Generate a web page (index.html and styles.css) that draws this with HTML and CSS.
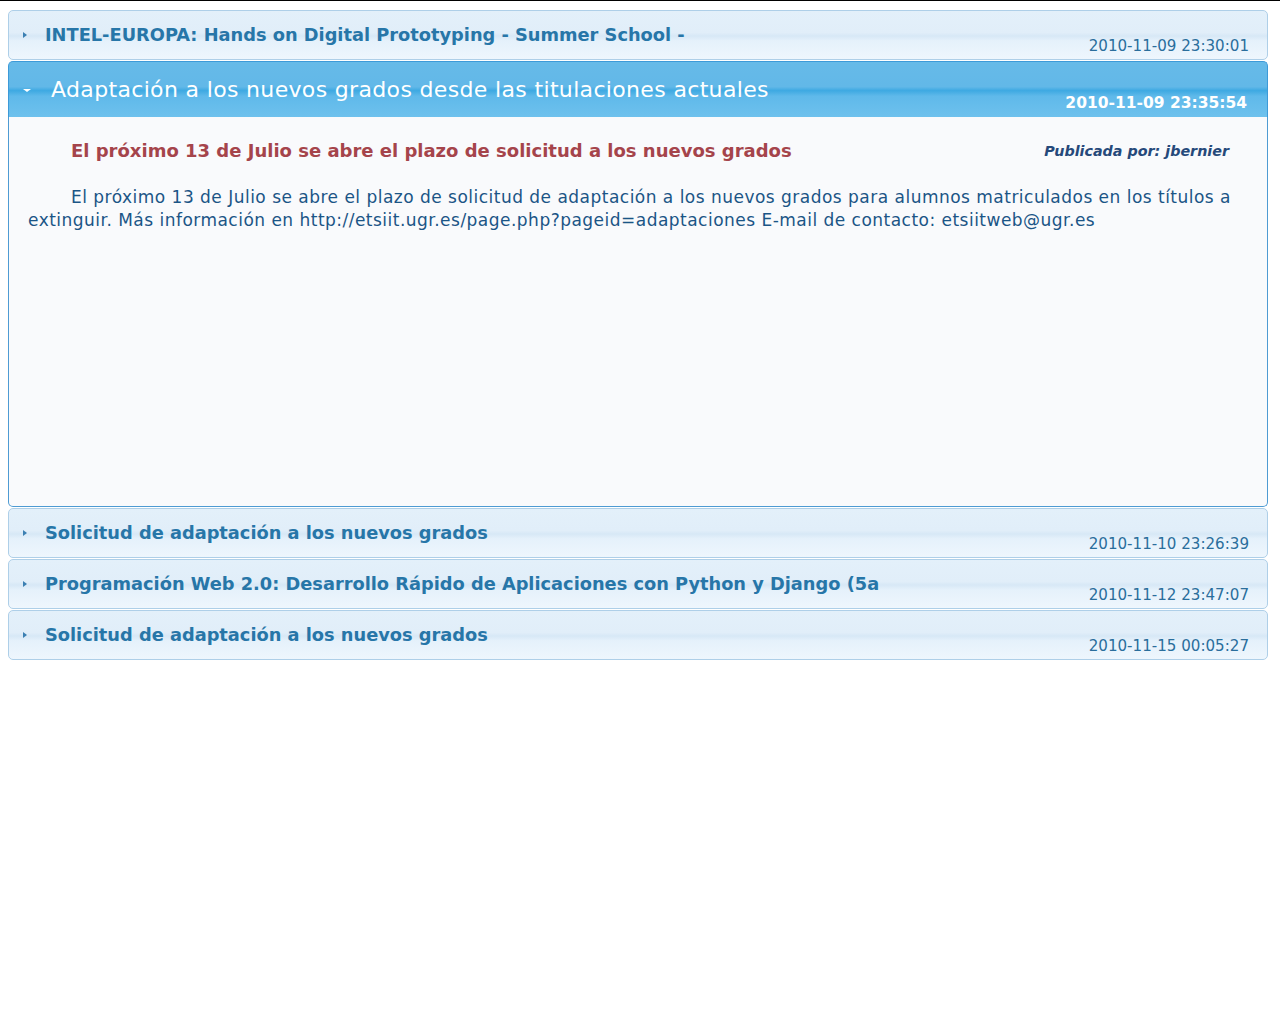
FILE: index.html
```html
<!DOCTYPE html>
<html>
<head>
<meta charset="utf-8">
<link rel="stylesheet" href="styles.css">
</head>
<body>
<div class="topline"></div>
<div class="accordion">
  <div class="hdr">
    <span class="arrow arrow-e"></span>
    <span class="title">INTEL-EUROPA: Hands on Digital Prototyping - Summer School -</span>
    <span class="date">2010-11-09 23:30:01</span>
  </div>
  <div class="hdr active">
    <span class="arrow arrow-s"></span>
    <span class="title">Adaptación a los nuevos grados desde las titulaciones actuales</span>
    <span class="date">2010-11-09 23:35:54</span>
  </div>
  <div class="content">
    <div class="news-head">
      <h2 class="news-title">El próximo 13 de Julio se abre el plazo de solicitud a los nuevos grados</h2>
      <span class="author">Publicada por: jbernier</span>
    </div>
    <p class="news-body">El próximo 13 de Julio se abre el plazo de solicitud de adaptación a los nuevos grados para alumnos matriculados en los títulos a extinguir. Más información en http://etsiit.ugr.es/page.php?pageid=adaptaciones E-mail de contacto: etsiitweb@ugr.es</p>
  </div>
  <div class="hdr">
    <span class="arrow arrow-e"></span>
    <span class="title">Solicitud de adaptación a los nuevos grados</span>
    <span class="date">2010-11-10 23:26:39</span>
  </div>
  <div class="hdr">
    <span class="arrow arrow-e"></span>
    <span class="title">Programación Web 2.0: Desarrollo Rápido de Aplicaciones con Python y Django (5a</span>
    <span class="date">2010-11-12 23:47:07</span>
  </div>
  <div class="hdr">
    <span class="arrow arrow-e"></span>
    <span class="title">Solicitud de adaptación a los nuevos grados</span>
    <span class="date">2010-11-15 00:05:27</span>
  </div>
</div>
</body>
</html>
```
FILE: styles.css
```css
html, body {
  margin: 0;
  padding: 0;
  background: #ffffff;
  font-family: "DejaVu Sans", Verdana, sans-serif;
}
.topline {
  height: 1px;
  background: #000000;
}
.accordion {
  padding: 9px 12px 0 8px;
  display: flex;
  flex-direction: column;
  gap: 1px;
}
.hdr {
  box-sizing: border-box;
  height: 50px;
  border: 1px solid #aecfe8;
  border-radius: 5px;
  display: flex;
  align-items: center;
  padding: 0 18px 0 14px;
  color: #2776a8;
  background: linear-gradient(to bottom, #e3f0fa 0%, #e1eef9 45%, #d7e8f6 52%, #e5f1fb 62%, #eef6fd 100%);
}
.hdr .title {
  font-weight: bold;
  font-size: 17.8px;
  flex: 1;
  margin-left: 18px;
  margin-top: -1px;
  white-space: nowrap;
}
.hdr .date {
  align-self: flex-end;
  font-size: 15.1px;
  padding-bottom: 4px;
  color: #2a6e9c;
}
.arrow {
  width: 0;
  height: 0;
  display: inline-block;
}
.arrow-e {
  border-top: 3px solid transparent;
  border-bottom: 3px solid transparent;
  border-left: 4px solid #3b7fb2;
}
.arrow-s {
  border-left: 4px solid transparent;
  border-right: 4px solid transparent;
  border-top: 3px solid #ffffff;
  margin-top: 1px;
}
.hdr.active {
  height: 56px;
  border-color: #3d9ad8;
  border-bottom: none;
  border-radius: 5px 5px 0 0;
  color: #ffffff;
  background: linear-gradient(to bottom, #66bae8 0%, #62b8e8 45%, #3ea9e2 52%, #5fb9ea 62%, #6ec1ed 100%);
}
.hdr.active .title {
  font-weight: normal;
  font-size: 22px;
  letter-spacing: 0.34px;
  margin-left: 20px;
  margin-top: 0;
}
.hdr.active .date {
  font-weight: bold;
  color: #ffffff;
  font-size: 15.5px;
  padding-bottom: 5px;
  margin-right: 2px;
}
.content {
  box-sizing: border-box;
  height: 390px;
  margin-top: -1px;
  border: 1px solid #4e9bd3;
  border-top: none;
  border-radius: 0 0 5px 5px;
  background: #f9fafc;
  padding: 23px 36px 0 19px;
}
.news-head {
  display: flex;
  align-items: center;
  justify-content: space-between;
}
.news-title {
  margin: 0;
  padding-left: 43px;
  font-size: 18px;
  font-weight: bold;
  color: #a5444b;
}
.author {
  font-style: italic;
  font-weight: bold;
  font-size: 14.3px;
  color: #26497a;
  margin-right: 2px;
}
.news-body {
  margin: 25px 0 0 0;
  font-size: 17px;
  line-height: 23px;
  text-indent: 43px;
  text-align: justify;
  color: #1b5586;
  letter-spacing: 0.48px;
}
```
